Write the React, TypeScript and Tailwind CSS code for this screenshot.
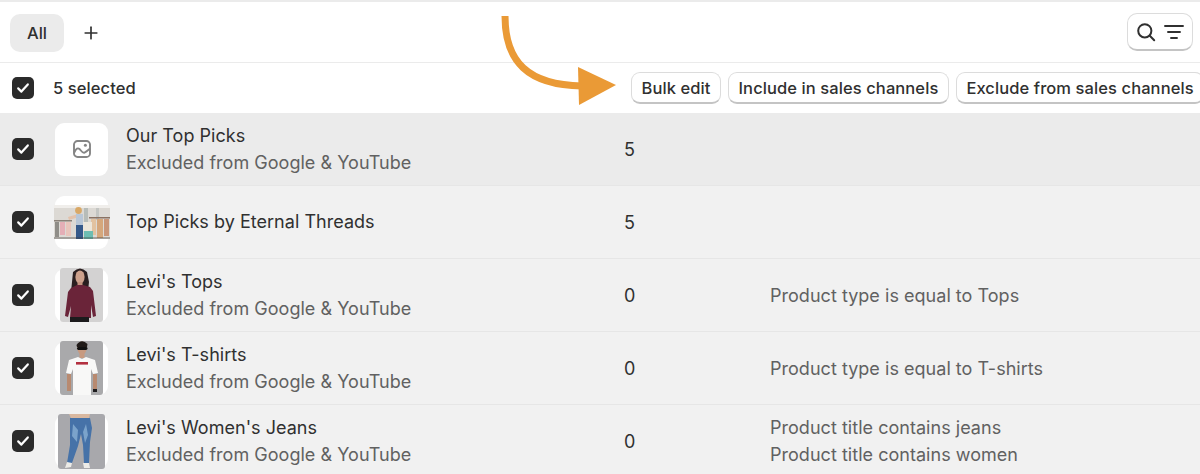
import { Plus } from "lucide-react";

const font = "font-['Inter','Liberation_Sans',sans-serif]";

function Checkbox() {
  return (
    <div className="h-[22px] w-[22px] shrink-0 rounded-[5px] bg-[#2b2b2b] flex items-center justify-center">
      <svg viewBox="0 0 22 22" className="h-[22px] w-[22px]" fill="none">
        <path d="M6.2 11.4l3.2 3.2 6.4-7.2" stroke="#fff" strokeWidth="2.2" strokeLinecap="round" strokeLinejoin="round" />
      </svg>
    </div>
  );
}

function ActionButton({ label }: { label: string }) {
  return (
    <button className="h-[32px] shrink-0 whitespace-nowrap rounded-[9px] border border-[#dcdcdc] border-b-2 border-b-[#c4c4c4] bg-white px-[9.5px] pt-[1px] text-[16.5px] font-[450] tracking-[0.09px] text-[#303030]">
      {label}
    </button>
  );
}

function PlaceholderThumb() {
  return (
    <svg viewBox="0 0 18 18" className="h-[18px] w-[18px]" fill="none" stroke="#858585" strokeWidth="1.9">
      <rect x="1" y="1" width="16" height="16" rx="3.6" />
      <path d="M1.5 12c1.6-3.6 3.4-4.4 5-3s3 4.4 5 3.6 3-2.4 5-3.6" strokeLinecap="round" />
      <circle cx="12.4" cy="5.2" r="1.5" fill="#858585" stroke="none" />
    </svg>
  );
}

function StoreThumb() {
  return (
    <svg viewBox="0 0 56 34" className="h-[34px] w-[56px] max-w-none shrink-0 blur-[0.4px]">
      <rect width="56" height="34" fill="#dcd9d4" />
      <rect width="56" height="3" fill="#f0eeeb" />
      <rect x="30" y="3" width="4" height="14" fill="#b7bcb8" />
      <rect x="42" y="3" width="3" height="12" fill="#c3c5c2" />
      <rect x="0" y="15" width="18" height="1.5" fill="#8a8178" />
      <rect x="1" y="17" width="4" height="15" fill="#8f8d88" />
      <rect x="6" y="17" width="5" height="13" fill="#e4aeb6" />
      <rect x="12" y="17" width="5" height="14" fill="#e8c4bb" />
      <rect x="35" y="12" width="21" height="1.5" fill="#8a7263" />
      <rect x="37" y="14" width="5" height="16" fill="#e2c2a0" />
      <rect x="43" y="14" width="6" height="19" fill="#d5a77c" />
      <rect x="50" y="14" width="5" height="17" fill="#c8967a" />
      <path d="M14 12l10-3 1 3-10 3z" fill="#e3c2ab" />
      <circle cx="24.5" cy="5.5" r="3.4" fill="#d9a866" />
      <rect x="22" y="9" width="7" height="11" fill="#b8c6d6" />
      <rect x="22" y="20" width="7" height="14" fill="#35598a" />
      <rect x="29" y="17" width="9" height="9" fill="#ece6da" />
      <rect x="30" y="26" width="9" height="8" fill="#6dbdb2" />
      <rect x="0" y="32" width="56" height="2" fill="#3a3633" opacity="0.35" />
    </svg>
  );
}

function TopThumb() {
  return (
    <svg viewBox="0 0 43 54" className="h-[54px] w-[43px] max-w-none shrink-0 rounded-[3px] blur-[0.4px]">
      <rect width="43" height="54" fill="#d3d2d2" />
      <path d="M13 4q7-7 14 0l2 10-1 9-4-4h-8l-5 5z" fill="#2a1f20" />
      <ellipse cx="20" cy="9" rx="4.6" ry="6.6" fill="#cda18c" />
      <rect x="17.5" y="14" width="5" height="5" fill="#c4937f" />
      <path d="M11 20l6-3h6l7 2 3 4 3 25-3 1-2-12 0 13H10l1-12-3 11-3-1 3-24z" fill="#6a2439" />
      <rect x="10" y="49" width="19" height="5" fill="#1c1b1d" />
    </svg>
  );
}

function TeeThumb() {
  return (
    <svg viewBox="0 0 43 54" className="h-[54px] w-[43px] max-w-none shrink-0 rounded-[3px] blur-[0.4px]">
      <rect width="43" height="54" fill="#a9a9ab" />
      <ellipse cx="22" cy="7" rx="4.8" ry="6.5" fill="#c79a80" />
      <path d="M16.5 4q5-7 11-1l-.5 3h-10z" fill="#201a18" />
      <rect x="17" y="6" width="10.5" height="3" rx="1.4" fill="#111" />
      <rect x="19.5" y="12" width="5" height="5" fill="#c79a80" />
      <path d="M6 32l3-13 9-3 4 2 4-2 9 3 3 13-5 1-2-5 0 26H13V28l-2 5z" fill="#f8f8f7" />
      <rect x="16" y="21" width="12" height="2.6" fill="#b3303f" />
      <rect x="7" y="33" width="4" height="17" fill="#b88a70" />
      <rect x="33" y="33" width="4" height="16" fill="#b88a70" />
      <rect x="33" y="48" width="4" height="3" fill="#1c1b1d" />
    </svg>
  );
}

function JeansThumb() {
  return (
    <svg viewBox="0 0 47 55" className="h-[55px] w-[47px] max-w-none shrink-0 rounded-[3px] blur-[0.4px]">
      <rect width="47" height="55" fill="#a8a8ac" />
      <path d="M11 0h21l-1 4H13z" fill="#d9b8a0" />
      <path d="M12 4h20l2 10-2 14-1 21h-5l-1-18-2-11-3 12-6 17h-5l3-18 0-13z" fill="#4672a8" />
      <path d="M15 10l5 6-1 12-5-6zM28 10l-3 8 2 11 3-8z" fill="#7ba3cb" />
      <path d="M9 48l5 1-1 4-6 1zM25 49h6l1 5h-6z" fill="#ecebe7" />
    </svg>
  );
}

const rows = [
  { name: "Our Top Picks", excluded: true, count: "5", thumb: <PlaceholderThumb />, bg: "bg-[#ebebeb]", conditions: [] as string[] },
  { name: "Top Picks by Eternal Threads", excluded: false, count: "5", thumb: <StoreThumb />, bg: "bg-[#f1f1f1]", conditions: [] },
  { name: "Levi's Tops", excluded: true, count: "0", thumb: <TopThumb />, bg: "bg-[#f1f1f1]", conditions: ["Product type is equal to Tops"] },
  { name: "Levi's T-shirts", excluded: true, count: "0", thumb: <TeeThumb />, bg: "bg-[#f1f1f1]", conditions: ["Product type is equal to T-shirts"] },
  { name: "Levi's Women's Jeans", excluded: true, count: "0", thumb: <JeansThumb />, bg: "bg-[#f1f1f1]", conditions: ["Product title contains jeans", "Product title contains women"] },
];

export default function App() {
  return (
    <div className={`relative h-[474px] w-[1200px] overflow-hidden bg-white ${font}`}>
      <div className="h-[2px] bg-[#ebebeb]" />

      <div className="flex h-[61px] items-center justify-between border-b border-[#ebebeb] pl-[10px] pr-[7px] pt-[2px]">
        <div className="flex items-center gap-[17px]">
          <div className="flex h-[38px] w-[54px] items-center justify-center rounded-[10px] bg-[#ebebeb] text-[16.5px] font-[450] text-[#303030]">All</div>
          <Plus className="h-[20px] w-[20px] text-[#303030]" strokeWidth={2} />
        </div>
        <div className="mb-[2px] flex h-[38px] w-[66px] items-center justify-center gap-[8px] rounded-[10px] border border-[#dcdcdc] border-b-2 border-b-[#c4c4c4] bg-white">
          <svg viewBox="0 0 20 20" className="h-[20px] w-[20px]" fill="none" stroke="#303030" strokeWidth="2" strokeLinecap="round">
            <circle cx="8.8" cy="8.8" r="6.6" />
            <path d="M13.8 13.8l4.4 4.4" />
          </svg>
          <svg viewBox="0 0 20 20" className="h-[20px] w-[20px]" fill="none" stroke="#303030" strokeWidth="1.9" strokeLinecap="round">
            <path d="M1 4h18M4 10h12M7 16h6" />
          </svg>
        </div>
      </div>

      <div className="flex h-[50px] items-center bg-white pl-[12px]">
        <Checkbox />
        <span className="w-[578px] shrink-0 pl-[19px] text-[16.5px] font-[450] whitespace-nowrap tracking-[0.09px] text-[#303030]">5 selected</span>
        <div className="ml-[19px] flex gap-[7px]">
          <ActionButton label="Bulk edit" />
          <ActionButton label="Include in sales channels" />
          <ActionButton label="Exclude from sales channels" />
        </div>
      </div>

      {rows.map((row) => (
        <div key={row.name} className={`flex h-[73px] shrink-0 items-center border-b border-[#e6e6e6] pl-[12px] ${row.bg}`}>
          <Checkbox />
          <div className="ml-[21px] flex h-[53px] w-[53px] shrink-0 items-center justify-center rounded-[9px] bg-white">
            {row.thumb}
          </div>
          <div className="ml-[18px] w-[498px] shrink-0 text-[18px] leading-[27.5px] tracking-[0.03px]">
            <div className="text-[#303030]">{row.name}</div>
            {row.excluded && <div className="text-[#616161]">Excluded from Google &amp; YouTube</div>}
          </div>
          <div className="w-[146px] shrink-0 text-[18px] text-[#303030]">{row.count}</div>
          <div className="text-[18px] leading-[27px] tracking-[0.03px] text-[#616161]">
            {row.conditions.map((c) => (
              <div key={c}>{c}</div>
            ))}
          </div>
        </div>
      ))}

      {/* annotation arrow */}
      <svg viewBox="0 0 1200 474" className="pointer-events-none absolute inset-0 h-[474px] w-[1200px]" fill="none">
        <path d="M505 16C505 62 528 85 582 86" stroke="#ea9a36" strokeWidth="7" />
        <path d="M578 67L616 85L579 105Z" fill="#ea9a36" />
      </svg>
    </div>
  );
}
